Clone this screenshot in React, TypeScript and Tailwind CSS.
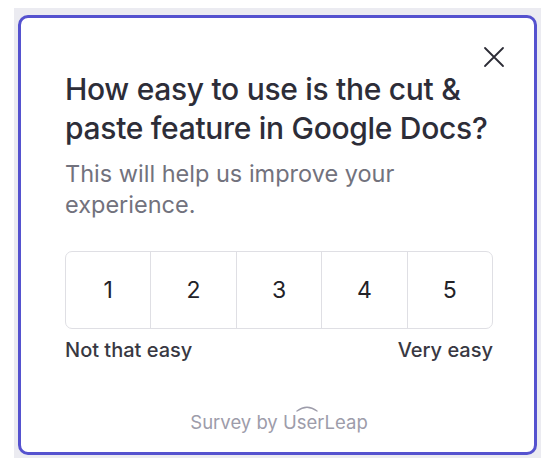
import React from "react";

export default function App() {
  const nums = [1, 2, 3, 4, 5];
  return (
    <div className="w-[556px] h-[470px] bg-white" style={{ fontFamily: "Inter, 'Noto Sans', sans-serif" }}>
      <div className="ml-[14px] mt-[8px] w-[527px] h-[450px] bg-[#ebebf1] pt-[7px] px-[4px]">
        <div className="relative w-[519px] h-[440px] bg-white border-[3px] border-[#5552cf] rounded-[10px] flex flex-col pl-[44px] pr-[41px] pt-[52px] pb-[18px]">
          <button className="absolute top-[28px] right-[29px] w-[22px] h-[22px] flex items-center justify-center text-[#2b2b35]" aria-label="Close">
            <svg width="22" height="22" viewBox="0 0 22 22" fill="none" stroke="currentColor" strokeWidth="1.8" strokeLinecap="round">
              <path d="M2 2 L20 20 M20 2 L2 20" />
            </svg>
          </button>
          <h1 className="text-[30px] leading-[39px] font-medium text-[#2d2d38] tracking-[-0.3px] whitespace-nowrap">
            How easy to use is the cut &amp;<br />paste feature in Google Docs?
          </h1>
          <p className="mt-[10px] text-[23.5px] leading-[31px] text-[#72727d]">
            This will help us improve your experience.
          </p>
          <div className="mt-[31px] flex h-[78px] border border-[#dfdfe4] rounded-[7px] overflow-hidden">
            {nums.map((n, i) => (
              <div
                key={n}
                className={`flex-1 flex items-center justify-center text-[23px] text-[#222228] ${i > 0 ? "border-l border-[#dfdfe4]" : ""}`}
              >
                {n}
              </div>
            ))}
          </div>
          <div className="mt-[7px] flex justify-between text-[20px] leading-[28px] font-medium text-[#383842]">
            <span>Not that easy</span>
            <span>Very easy</span>
          </div>
          <div className="mt-auto flex justify-center text-[18.5px] leading-[24px] text-[#9d9caa]">
            <span>
              Survey by U
              <span className="relative">
                <svg className="absolute left-[-1px] top-[-6px]" width="22" height="7" viewBox="0 0 22 7" fill="none" stroke="#9d9caa" strokeWidth="1.3" strokeLinecap="round">
                  <path d="M1 6 Q11 -1.5 21 6" />
                </svg>
                se
              </span>
              rLeap
            </span>
          </div>
        </div>
      </div>
    </div>
  );
}
